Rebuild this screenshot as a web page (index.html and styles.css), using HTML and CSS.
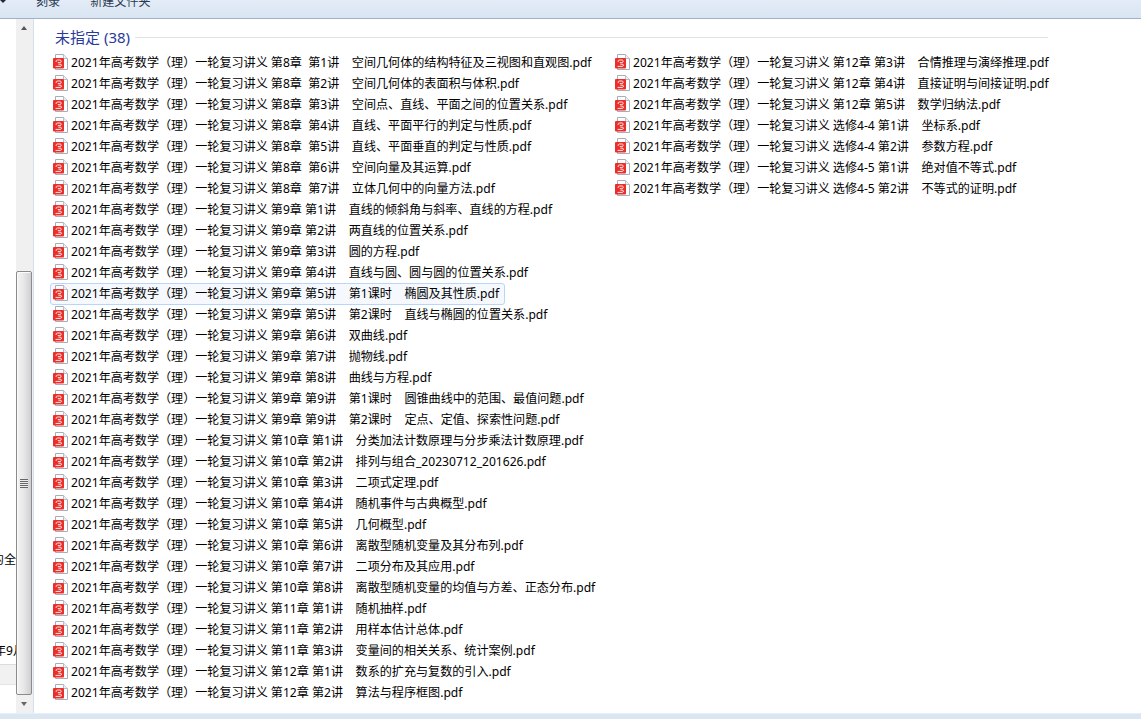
FILE: index.html
```html
<!DOCTYPE html>
<html lang="zh">
<head>
<meta charset="utf-8">
<title>未指定</title>
<link rel="stylesheet" href="styles.css">
</head>
<body>
<svg class="defs" width="0" height="0" aria-hidden="true">
  <symbol id="pdf" viewBox="0 0 16 16">
    <path d="M2.5 .5H10.5L14.5 4.5V15.5H2.5Z" fill="#fff" stroke="#a9adb8"/>
    <path d="M10.5 .5V4.5H14.5" fill="#eef0f4" stroke="#b9bdc6"/>
    <rect x="0" y="4" width="11" height="10.5" rx="1" fill="#ea2f2b"/>
    <path d="M3.2 8V7.2C3.2 6.3 3.8 6 4.6 6H6.8C7.8 6 8.2 6.6 8.2 7.3C8.2 8.1 7.7 8.6 6.8 8.6H4.8M2.6 12.4H7.2C8 12.4 8.5 11.8 8.5 11.2C8.5 10.6 8 10.2 7.2 10.2H5.4" fill="none" stroke="#fff" stroke-width=".9"/>
  </symbol>
</svg>
<header class="toolbar">
  <span class="caret"></span>
  <span class="tool tool-burn">刻录</span>
  <span class="tool">新建文件夹</span>
</header>
<div class="main">
  <aside class="nav">
    <div class="nav-text nav-text-a"><span>的全</span></div>
    <div class="nav-text nav-text-b"><span>年9月</span></div>
    <div class="nav-bar"></div>
  </aside>
  <div class="scrollbar">
    <div class="arrow arrow-up"></div>
    <div class="track">
      <div class="thumb"><div class="grip"></div></div>
    </div>
    <div class="arrow arrow-down"></div>
  </div>
  <main class="content">
    <div class="group-head">
      <h2 class="group-title">未指定 (38)</h2>
      <div class="group-rule"></div>
    </div>
    <ul class="files">
      <li class="file"><svg class="icon"><use href="#pdf"/></svg><span>2021年高考数学（理）一轮复习讲义 第8章  第1讲    空间几何体的结构特征及三视图和直观图.pdf</span></li>
      <li class="file"><svg class="icon"><use href="#pdf"/></svg><span>2021年高考数学（理）一轮复习讲义 第8章  第2讲    空间几何体的表面积与体积.pdf</span></li>
      <li class="file"><svg class="icon"><use href="#pdf"/></svg><span>2021年高考数学（理）一轮复习讲义 第8章  第3讲    空间点、直线、平面之间的位置关系.pdf</span></li>
      <li class="file"><svg class="icon"><use href="#pdf"/></svg><span>2021年高考数学（理）一轮复习讲义 第8章  第4讲    直线、平面平行的判定与性质.pdf</span></li>
      <li class="file"><svg class="icon"><use href="#pdf"/></svg><span>2021年高考数学（理）一轮复习讲义 第8章  第5讲    直线、平面垂直的判定与性质.pdf</span></li>
      <li class="file"><svg class="icon"><use href="#pdf"/></svg><span>2021年高考数学（理）一轮复习讲义 第8章  第6讲    空间向量及其运算.pdf</span></li>
      <li class="file"><svg class="icon"><use href="#pdf"/></svg><span>2021年高考数学（理）一轮复习讲义 第8章  第7讲    立体几何中的向量方法.pdf</span></li>
      <li class="file"><svg class="icon"><use href="#pdf"/></svg><span>2021年高考数学（理）一轮复习讲义 第9章 第1讲    直线的倾斜角与斜率、直线的方程.pdf</span></li>
      <li class="file"><svg class="icon"><use href="#pdf"/></svg><span>2021年高考数学（理）一轮复习讲义 第9章 第2讲    两直线的位置关系.pdf</span></li>
      <li class="file"><svg class="icon"><use href="#pdf"/></svg><span>2021年高考数学（理）一轮复习讲义 第9章 第3讲    圆的方程.pdf</span></li>
      <li class="file"><svg class="icon"><use href="#pdf"/></svg><span>2021年高考数学（理）一轮复习讲义 第9章 第4讲    直线与圆、圆与圆的位置关系.pdf</span></li>
      <li class="file file-hover"><svg class="icon"><use href="#pdf"/></svg><span>2021年高考数学（理）一轮复习讲义 第9章 第5讲    第1课时    椭圆及其性质.pdf</span></li>
      <li class="file"><svg class="icon"><use href="#pdf"/></svg><span>2021年高考数学（理）一轮复习讲义 第9章 第5讲    第2课时    直线与椭圆的位置关系.pdf</span></li>
      <li class="file"><svg class="icon"><use href="#pdf"/></svg><span>2021年高考数学（理）一轮复习讲义 第9章 第6讲    双曲线.pdf</span></li>
      <li class="file"><svg class="icon"><use href="#pdf"/></svg><span>2021年高考数学（理）一轮复习讲义 第9章 第7讲    抛物线.pdf</span></li>
      <li class="file"><svg class="icon"><use href="#pdf"/></svg><span>2021年高考数学（理）一轮复习讲义 第9章 第8讲    曲线与方程.pdf</span></li>
      <li class="file"><svg class="icon"><use href="#pdf"/></svg><span>2021年高考数学（理）一轮复习讲义 第9章 第9讲    第1课时    圆锥曲线中的范围、最值问题.pdf</span></li>
      <li class="file"><svg class="icon"><use href="#pdf"/></svg><span>2021年高考数学（理）一轮复习讲义 第9章 第9讲    第2课时    定点、定值、探索性问题.pdf</span></li>
      <li class="file"><svg class="icon"><use href="#pdf"/></svg><span>2021年高考数学（理）一轮复习讲义 第10章 第1讲    分类加法计数原理与分步乘法计数原理.pdf</span></li>
      <li class="file"><svg class="icon"><use href="#pdf"/></svg><span>2021年高考数学（理）一轮复习讲义 第10章 第2讲    排列与组合_20230712_201626.pdf</span></li>
      <li class="file"><svg class="icon"><use href="#pdf"/></svg><span>2021年高考数学（理）一轮复习讲义 第10章 第3讲    二项式定理.pdf</span></li>
      <li class="file"><svg class="icon"><use href="#pdf"/></svg><span>2021年高考数学（理）一轮复习讲义 第10章 第4讲    随机事件与古典概型.pdf</span></li>
      <li class="file"><svg class="icon"><use href="#pdf"/></svg><span>2021年高考数学（理）一轮复习讲义 第10章 第5讲    几何概型.pdf</span></li>
      <li class="file"><svg class="icon"><use href="#pdf"/></svg><span>2021年高考数学（理）一轮复习讲义 第10章 第6讲    离散型随机变量及其分布列.pdf</span></li>
      <li class="file"><svg class="icon"><use href="#pdf"/></svg><span>2021年高考数学（理）一轮复习讲义 第10章 第7讲    二项分布及其应用.pdf</span></li>
      <li class="file"><svg class="icon"><use href="#pdf"/></svg><span>2021年高考数学（理）一轮复习讲义 第10章 第8讲    离散型随机变量的均值与方差、正态分布.pdf</span></li>
      <li class="file"><svg class="icon"><use href="#pdf"/></svg><span>2021年高考数学（理）一轮复习讲义 第11章 第1讲    随机抽样.pdf</span></li>
      <li class="file"><svg class="icon"><use href="#pdf"/></svg><span>2021年高考数学（理）一轮复习讲义 第11章 第2讲    用样本估计总体.pdf</span></li>
      <li class="file"><svg class="icon"><use href="#pdf"/></svg><span>2021年高考数学（理）一轮复习讲义 第11章 第3讲    变量间的相关关系、统计案例.pdf</span></li>
      <li class="file"><svg class="icon"><use href="#pdf"/></svg><span>2021年高考数学（理）一轮复习讲义 第12章 第1讲    数系的扩充与复数的引入.pdf</span></li>
      <li class="file"><svg class="icon"><use href="#pdf"/></svg><span>2021年高考数学（理）一轮复习讲义 第12章 第2讲    算法与程序框图.pdf</span></li>
      <li class="file"><svg class="icon"><use href="#pdf"/></svg><span>2021年高考数学（理）一轮复习讲义 第12章 第3讲    合情推理与演绎推理.pdf</span></li>
      <li class="file"><svg class="icon"><use href="#pdf"/></svg><span>2021年高考数学（理）一轮复习讲义 第12章 第4讲    直接证明与间接证明.pdf</span></li>
      <li class="file"><svg class="icon"><use href="#pdf"/></svg><span>2021年高考数学（理）一轮复习讲义 第12章 第5讲    数学归纳法.pdf</span></li>
      <li class="file"><svg class="icon"><use href="#pdf"/></svg><span>2021年高考数学（理）一轮复习讲义 选修4-4 第1讲    坐标系.pdf</span></li>
      <li class="file"><svg class="icon"><use href="#pdf"/></svg><span>2021年高考数学（理）一轮复习讲义 选修4-4 第2讲    参数方程.pdf</span></li>
      <li class="file"><svg class="icon"><use href="#pdf"/></svg><span>2021年高考数学（理）一轮复习讲义 选修4-5 第1讲    绝对值不等式.pdf</span></li>
      <li class="file"><svg class="icon"><use href="#pdf"/></svg><span>2021年高考数学（理）一轮复习讲义 选修4-5 第2讲    不等式的证明.pdf</span></li>
    </ul>
  </main>
</div>
<footer class="statusbar"></footer>
</body>
</html>
```
FILE: styles.css
```css
* { box-sizing: border-box; }
html, body { height: 100%; }
body {
  margin: 0;
  height: 719px;
  width: 1141px;
  overflow: hidden;
  display: flex;
  flex-direction: column;
  background: #fff;
  color: #000;
  font-family: "Noto Sans", "Noto Sans CJK SC", sans-serif;
  font-size: 12.08px;
}
.defs { position: absolute; }
.toolbar {
  height: 19px;
  flex: none;
  display: flex;
  align-items: flex-end;
  gap: 30px;
  overflow: hidden;
  padding: 0 0 8px 36px;
  background: linear-gradient(#e3ecf7, #dae5f3);
  border-bottom: 1px solid #a3b0c6;
  color: #2b3a4f;
  position: relative;
}
.tool { white-space: nowrap; line-height: 16px; }
.caret {
  position: absolute;
  left: 0;
  top: 0;
  border-top: 3px solid #1d2a3c;
  border-left: 3px solid transparent;
  border-right: 3px solid transparent;
}
.main { flex: 1; min-height: 0; display: flex; }
.nav {
  width: 16px;
  flex: none;
  display: flex;
  flex-direction: column;
  background: #fff;
  overflow: hidden;
  padding-top: 531px;
}
.nav-text {
  display: flex;
  justify-content: flex-end;
  white-space: nowrap;
  line-height: 20px;
  height: 20px;
}
.nav-text-b { margin-top: 71px; }
.nav-text-b span { margin-right: -9px; }
.nav-bar {
  height: 21px;
  margin-top: 3px;
  background: #f1f1f1;
  border-top: 1px solid #dcdcdc;
  border-bottom: 1px solid #e4e4e4;
}
.scrollbar {
  width: 17px;
  flex: none;
  display: flex;
  flex-direction: column;
  background: #f0f0f0;
}
.arrow { height: 17px; flex: none; position: relative; }
.arrow-down { height: 18px; }
.arrow::after {
  content: "";
  position: absolute;
  left: 5px;
  top: 7px;
  border-left: 3px solid transparent;
  border-right: 3px solid transparent;
}
.arrow-up::after { border-bottom: 4px solid #555; }
.arrow-down::after { border-top: 4px solid #666; }
.track { flex: 1; min-height: 0; display: flex; flex-direction: column; justify-content: flex-end; }
.thumb {
  height: 424px;
  width: 16px;
  border: 1px solid #8b8b8b;
  border-radius: 2px;
  background: linear-gradient(90deg, #f3f3f3, #e9e9e9 45%, #cfcfd3);
  box-shadow: inset 1px 1px 0 #fbfbfb;
  display: flex;
  align-items: center;
  justify-content: center;
}
.grip {
  width: 8px;
  height: 9px;
  background: repeating-linear-gradient(#666 0 1px, #eee 1px 2px);
}
.content {
  flex: 1;
  min-width: 0;
  border-left: 1px solid #d4e0ef;
  padding: 8px 0 0 16px;
}
.group-head {
  display: flex;
  align-items: center;
  gap: 5px;
  height: 20px;
  padding-left: 5px;
  margin-right: 93px;
}
.group-title {
  margin: 0 0 2px;
  font-size: 15px;
  font-weight: 400;
  color: #2a3a9c;
  white-space: nowrap;
}
.group-rule { flex: 1; height: 1px; background: #e2e2e2; }
.files {
  list-style: none;
  margin: 4px 0 0;
  padding: 0;
  display: grid;
  grid-auto-flow: column;
  grid-template-rows: repeat(31, 21px);
  grid-template-columns: 562px 1fr;
}
.file {
  display: flex;
  align-items: center;
  gap: 2px;
  height: 21px;
  padding-left: 3px;
  white-space: pre;
}
.icon { width: 16px; height: 16px; flex: none; margin-top: 1px; }
.file-hover { position: relative; }
.file-hover::before {
  content: "";
  position: absolute;
  left: 0;
  top: 1px;
  width: 453px;
  height: 20px;
  border: 1px solid #b8d6fb;
  border-radius: 3px;
  background: #f5f9fe;
  z-index: -1;
}
.statusbar {
  height: 6px;
  flex: none;
  background: #dbe6f3;
  border-top: 1px solid #e8eff8;
}
```
